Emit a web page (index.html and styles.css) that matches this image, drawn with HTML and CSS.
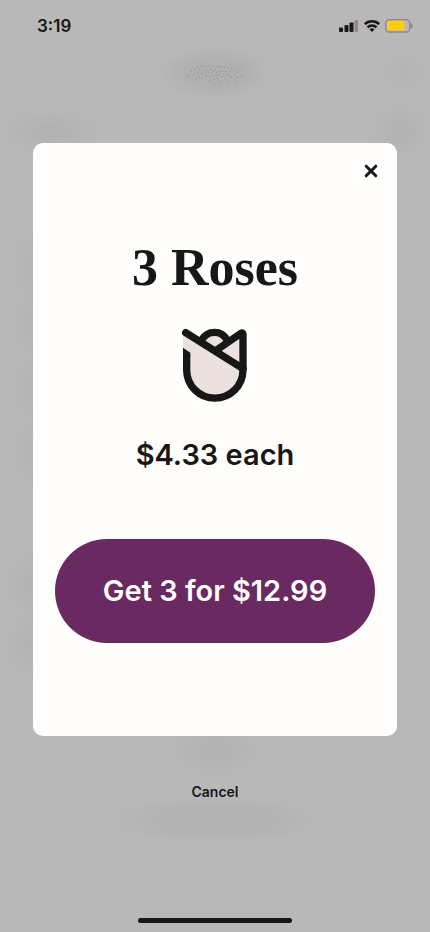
FILE: index.html
```html
<!DOCTYPE html>
<html lang="en">
<head>
<meta charset="utf-8">
<meta name="viewport" content="width=device-width, initial-scale=1">
<title>3 Roses</title>
<link rel="stylesheet" href="styles.css">
</head>
<body>
<div class="screen">
  <header class="status">
    <span class="time">3:19</span>
    <div class="indicators">
      <svg width="20" height="14" viewBox="0 0 20 14" aria-hidden="true">
        <rect x="0" y="8.500" width="4" height="4.500" rx="1" fill="#171717"/>
        <rect x="5.500" y="6" width="4" height="7" rx="1" fill="#171717"/>
        <rect x="10.500" y="3.500" width="4" height="9.500" rx="1" fill="#171717"/>
        <rect x="15.500" y="1" width="3.500" height="12" rx="1" fill="#94848c"/>
      </svg>
      <svg width="16" height="14" viewBox="0 0 16 14" fill="none" stroke="#171717" stroke-width="2.400" aria-hidden="true">
        <path d="M0.800 5.200a10.200 10.200 0 0 1 14.400 0M3.500 8.300a6.400 6.400 0 0 1 9 0"/>
        <path d="M8 13l-2.500-2.600a3.600 3.600 0 0 1 5 0z" fill="#171717" stroke="none"/>
      </svg>
      <svg width="28" height="14" viewBox="0 0 28 14" aria-hidden="true">
        <rect x="0.700" y="0.700" width="24" height="12.300" rx="3.500" fill="none" stroke="#94848c" stroke-width="1.300"/>
        <rect x="2" y="2" width="17.500" height="9.700" rx="2" fill="#fdcb10"/>
        <path d="M25.300 3.700c3.400 1.700 3.400 4.700 0 6.400z" fill="#94848c"/>
      </svg>
    </div>
  </header>

  <svg class="speckle" width="56" height="20" viewBox="84 60 168 60" aria-hidden="true">
    <path d="M115 67h0M127 64h0M139 64h0M151 64h0M163 64h0M175 64h0M184 67h0M196 67h0M205 70h0M217 70h0M106 73h0M97 79h0M121 76h0M133 76h0M142 76h0M154 73h0M169 73h0M163 79h0M172 82h0M181 79h0M190 79h0M199 79h0M214 79h0M226 76h0M235 82h0M88 94h0M103 88h0M115 85h0M130 85h0M139 85h0M148 82h0M157 85h0M163 91h0M172 91h0M181 88h0M193 88h0M202 88h0M208 91h0M217 97h0M229 91h0M235 97h0M247 94h0M121 94h0M142 94h0M151 94h0M187 94h0M112 100h0M130 100h0M166 103h0M175 100h0M196 100h0M205 106h0M151 106h0M184 112h0M229 112h0" stroke="#94848c" stroke-width="3" stroke-linecap="square"/>
  </svg>

  <main class="dialog" role="dialog" aria-labelledby="title">
    <button class="close" type="button" aria-label="Close">
      <svg width="14" height="14" viewBox="0 0 14 14" stroke="#171717" stroke-width="3" stroke-linecap="round" aria-hidden="true">
        <path d="M2.200 2.200l9.600 9.600M11.800 2.200l-9.600 9.600"/>
      </svg>
    </button>
    <h1 class="title" id="title">3 Roses</h1>
    <svg class="rose" width="66" height="76" viewBox="36 39 198 228" aria-hidden="true">
      <path d="M39 60L100 78Q135 35 172 78L219 53V165A84.500 84.500 0 0 1 50 165V107L39 99Z" fill="#ebe2df"/>
      <g fill="none" stroke="#171717" stroke-width="22" stroke-linejoin="round">
        <path d="M47 53L219 161" stroke-linecap="round"/>
        <path d="M95 75Q108 52 134 52Q159 52 171 75"/>
        <path d="M140 105L213 55Q219 51 219 58V165A84.500 84.500 0 0 1 50 165V120"/>
      </g>
      <path d="M39 98L61 113V122H39Z" fill="#171717"/>
    </svg>
    <p class="price">$4.33 each</p>
    <button class="buy" type="button">Get 3 for $12.99</button>
  </main>

  <button class="cancel" type="button">Cancel</button>
  <div class="home"></div>
</div>
</body>
</html>
```
FILE: styles.css
```css
* {
  box-sizing: border-box;
}

body {
  margin: 0;
  color: #171717;
  font-family: Inter, "Liberation Sans", sans-serif;
}

button {
  padding: 0;
  border: 0;
  background: none;
  color: inherit;
  font: inherit;
  cursor: pointer;
}

svg {
  display: block;
}

.screen {
  display: flex;
  flex-direction: column;
  min-height: 100vh;
  /* Soft shapes of the dimmed page behind the dialog */
  background:
    radial-gradient(closest-side, #b0b0b0 50%, transparent) 50% 46px / 110px 54px no-repeat,
    radial-gradient(closest-side, #b2b2b2 20%, transparent) 0 108px / 100px 46px no-repeat,
    radial-gradient(closest-side, #b5b5b5 20%, transparent) 100% 50px / 52px 44px no-repeat,
    radial-gradient(closest-side, #b2b2b2 20%, transparent) 100% 104px / 60px 54px no-repeat,
    radial-gradient(closest-side, #b4b4b4 20%, transparent) 8px 230px / 60px 70px no-repeat,
    radial-gradient(closest-side, #b4b4b4 20%, transparent) 8px 290px / 60px 70px no-repeat,
    radial-gradient(closest-side, #b4b4b4 20%, transparent) 8px 354px / 60px 70px no-repeat,
    radial-gradient(closest-side, #b4b4b4 20%, transparent) 8px 420px / 60px 70px no-repeat,
    radial-gradient(closest-side, #b3b3b3 20%, transparent) 4px 550px / 60px 70px no-repeat,
    radial-gradient(closest-side, #b3b3b3 20%, transparent) 4px 610px / 60px 70px no-repeat,
    radial-gradient(closest-side, #b2b2b2 20%, transparent) 50% 724px / 90px 52px no-repeat,
    radial-gradient(closest-side, #b2b2b2 50%, transparent) 50% 796px / 210px 48px no-repeat,
    #b8b8b8;
}

.status {
  display: flex;
  align-items: center;
  justify-content: space-between;
  height: 52px;
  padding: 0 17px 0 37px;
}

.time {
  font-size: 17px;
  font-weight: 600;
}

.indicators {
  display: flex;
  gap: 5px;
}

.speckle {
  align-self: center;
  margin-top: 13px;
}

.dialog {
  display: flex;
  flex-direction: column;
  align-items: center;
  margin: 58px 33px 0;
  padding: 16px 22px 93px;
  border-radius: 10px;
  background: #fffefd;
}

.close {
  display: grid;
  place-items: center;
  align-self: flex-end;
  width: 24px;
  height: 24px;
  margin-right: -8px;
}

.title {
  margin: 55px 0 0;
  font-family: "Liberation Serif", serif;
  font-size: 52px;
  font-weight: 700;
  line-height: 60px;
}

.rose {
  margin-top: 30px;
}

.price {
  margin: 31px 0 0;
  font-size: 29px;
  font-weight: 600;
  line-height: 40px;
}

.buy {
  width: 100%;
  margin-top: 64px;
  padding: 32px 16px;
  border-radius: 52px;
  background: #682a60;
  color: #fffefd;
  font-size: 29px;
  font-weight: 600;
  line-height: 40px;
}

.cancel {
  align-self: center;
  margin-top: 46px;
  font-size: 14px;
  font-weight: 600;
  line-height: 20px;
}

.home {
  align-self: center;
  width: 36%;
  height: 5px;
  margin: auto 0 9px;
  border-radius: 3px;
  background: #171717;
}
```
